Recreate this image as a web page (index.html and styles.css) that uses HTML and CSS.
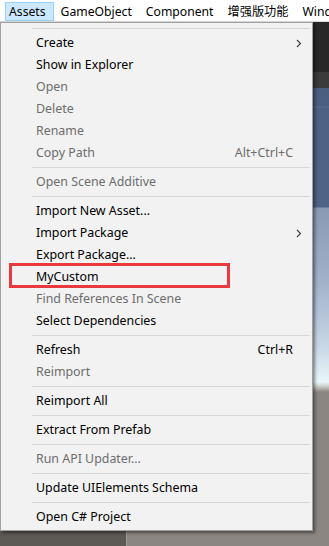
FILE: index.html
```html
<!DOCTYPE html>
<html>
<head>
<meta charset="utf-8">
<link rel="stylesheet" href="styles.css">
</head>
<body>
<div class="menubar">
  <span class="mb-item active">Assets</span>
  <span class="mb-item">GameObject</span>
  <span class="mb-item">Component</span>
  <span class="mb-item">增强版功能</span>
  <span class="mb-item">Wind</span>
</div>
<div class="scene">
  <div class="toolbar"></div>
  <div class="tabbar"></div>
  <div class="panels">
    <div class="hierarchy"></div>
    <div class="view"></div>
  </div>
</div>
<div class="dropdown">
  <div class="sep"></div>
  <div class="item"><span>Create</span><svg class="arrow" width="6" height="9" viewBox="0 0 6 9"><polyline points="1,1 4.5,4.5 1,8" fill="none" stroke="#3a3a3a" stroke-width="1.1"/></svg></div>
  <div class="item"><span>Show in Explorer</span></div>
  <div class="item disabled"><span>Open</span></div>
  <div class="item disabled"><span>Delete</span></div>
  <div class="item disabled"><span>Rename</span></div>
  <div class="item disabled"><span>Copy Path</span><span class="key">Alt+Ctrl+C</span></div>
  <div class="sep"></div>
  <div class="item disabled"><span>Open Scene Additive</span></div>
  <div class="sep"></div>
  <div class="item"><span>Import New Asset...</span></div>
  <div class="item"><span>Import Package</span><svg class="arrow" width="6" height="9" viewBox="0 0 6 9"><polyline points="1,1 4.5,4.5 1,8" fill="none" stroke="#3a3a3a" stroke-width="1.1"/></svg></div>
  <div class="item"><span>Export Package...</span></div>
  <div class="item marked"><span>MyCustom</span></div>
  <div class="item disabled"><span>Find References In Scene</span></div>
  <div class="item"><span>Select Dependencies</span></div>
  <div class="sep"></div>
  <div class="item"><span>Refresh</span><span class="key">Ctrl+R</span></div>
  <div class="item disabled"><span>Reimport</span></div>
  <div class="sep"></div>
  <div class="item"><span>Reimport All</span></div>
  <div class="sep"></div>
  <div class="item"><span>Extract From Prefab</span></div>
  <div class="sep"></div>
  <div class="item disabled"><span>Run API Updater...</span></div>
  <div class="sep"></div>
  <div class="item"><span>Update UIElements Schema</span></div>
  <div class="sep"></div>
  <div class="item"><span>Open C# Project</span></div>
</div>
</body>
</html>
```
FILE: styles.css
```css
html, body {
  margin: 0;
  padding: 0;
}
body {
  width: 329px;
  height: 546px;
  overflow: hidden;
  position: relative;
  font-family: "Noto Sans", "Noto Sans CJK SC", sans-serif;
  font-size: 12px;
  color: #000;
  background: #8b8681;
}
.menubar {
  height: 21px;
  background: #fff;
  border-bottom: 1px solid #dadada;
  display: flex;
  align-items: stretch;
  white-space: nowrap;
  overflow: hidden;
  font-size: 12.2px;
}
.mb-item {
  padding: 0 7px;
  line-height: 19px;
  margin-top: 2px;
  height: 19px;
}
.mb-item.active {
  margin-left: 5px;
  padding: 0 7px 0 3px;
  background: #cce8ff;
  border: 1px solid #99d1ff;
  height: 17px;
  line-height: 17px;
  margin-top: 2px;
}
.scene {
  display: flex;
  flex-direction: column;
  height: 524px;
}
.toolbar {
  height: 50px;
  background: #282828;
}
.tabbar {
  height: 16px;
  background: #3b3b3b;
}
.panels {
  flex: 1;
  display: flex;
}
.hierarchy {
  width: 126px;
  background: #5d5955;
  border-right: 1px solid #a19c97;
}
.view {
  flex: 1;
  background: linear-gradient(to bottom,
    #4a5e80 0, #4b5f82 18px, #5a6d8e 19px, #4d6184 20px, #4e6386 119px,
    #8999b4 120px, #a0b0c8 190px, #c8d8e6 260px, #e9f6f9 294px,
    #cfd2cf 298px, #8b8681 304px, #8b8681 100%);
}
.dropdown {
  position: absolute;
  top: 22px;
  left: 0;
  width: 311px;
  padding: 2px 0;
  background: #f2f2f2;
  border: 1px solid #a0a0a0;
  box-shadow: 2px 2px 3px rgba(0, 0, 0, 0.45);
  font-size: 12.4px;
}
.item {
  position: relative;
  height: 22px;
  line-height: 22px;
  padding: 0 19px 0 35px;
  display: flex;
  justify-content: space-between;
  align-items: center;
  white-space: nowrap;
}
.item.disabled {
  color: #6d6d6d;
}
.key {
  color: inherit;
}
.arrow {
  position: absolute;
  right: 10px;
  top: 7px;
}
.sep {
  height: 7px;
  position: relative;
}
.sep::after {
  content: "";
  position: absolute;
  left: 31px;
  right: 2px;
  top: 3px;
  height: 1px;
  background: #d7d7d7;
}
.marked::after {
  content: "";
  position: absolute;
  left: 8px;
  top: -3px;
  width: 215px;
  height: 19px;
  border: 3px solid #ea3a40;
}
```
